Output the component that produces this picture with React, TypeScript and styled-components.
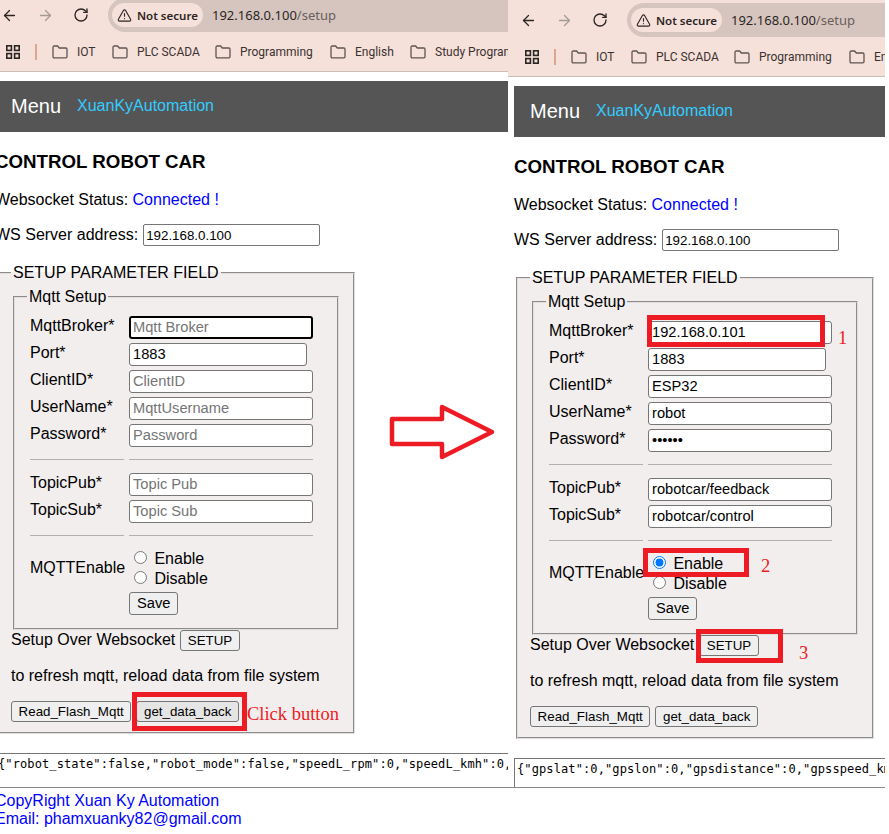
import styled, { createGlobalStyle } from "styled-components"
import { ArrowLeft, ArrowRight, RotateCw, TriangleAlert } from "lucide-react"

const BOOKMARKS = [
  { name: "IOT", width: 60 },
  { name: "PLC SCADA", width: 103 },
  { name: "Programming", width: 115 },
  { name: "English", width: 80 },
  { name: "Study Programming", width: 150 },
]

type Field = { label: string; placeholder: string; value?: string; type?: string; short?: boolean; focused?: boolean }

const emptyFields: Field[][] = [
  [
    { label: "MqttBroker*", placeholder: "Mqtt Broker", focused: true },
    { label: "Port*", placeholder: "Port", value: "1883", short: true },
    { label: "ClientID*", placeholder: "ClientID" },
    { label: "UserName*", placeholder: "MqttUsername" },
    { label: "Password*", placeholder: "Password" },
  ],
  [
    { label: "TopicPub*", placeholder: "Topic Pub" },
    { label: "TopicSub*", placeholder: "Topic Sub" },
  ],
]

const filledFields: Field[][] = [
  [
    { label: "MqttBroker*", placeholder: "Mqtt Broker", value: "192.168.0.101" },
    { label: "Port*", placeholder: "Port", value: "1883", short: true },
    { label: "ClientID*", placeholder: "ClientID", value: "ESP32" },
    { label: "UserName*", placeholder: "MqttUsername", value: "robot" },
    { label: "Password*", placeholder: "Password", value: "robot1", type: "password" },
  ],
  [
    { label: "TopicPub*", placeholder: "Topic Pub", value: "robotcar/feedback" },
    { label: "TopicSub*", placeholder: "Topic Sub", value: "robotcar/control" },
  ],
]

function FolderIcon() {
  return (
    <svg width="16" height="14" viewBox="0 0 16 14" fill="none" stroke="#5f5552" strokeWidth="1.3">
      <path d="M1 2.2c0-.7.5-1.2 1.2-1.2h3.4l1.7 2h6.5c.7 0 1.2.5 1.2 1.2v7.4c0 .7-.5 1.2-1.2 1.2H2.2c-.7 0-1.2-.5-1.2-1.2z" />
    </svg>
  )
}

function AppsIcon() {
  return (
    <svg width="14" height="14" viewBox="0 0 14 14" fill="none" stroke="#2b2523" strokeWidth="1.6">
      <rect x="0.8" y="0.8" width="4.6" height="4.6" />
      <rect x="8.6" y="0.8" width="4.6" height="4.6" />
      <rect x="0.8" y="8.6" width="4.6" height="4.6" />
      <rect x="8.6" y="8.6" width="4.6" height="4.6" />
    </svg>
  )
}

function BrowserBar() {
  return (
    <Chrome>
      <NavRow>
        <NavButton>
          <ArrowLeft size={17} color="#2b2523" strokeWidth={1.8} />
        </NavButton>
        <NavButton>
          <ArrowRight size={17} color="#a39a96" strokeWidth={1.8} />
        </NavButton>
        <NavButton>
          <RotateCw size={16} color="#2b2523" strokeWidth={2} />
        </NavButton>
        <UrlBar>
          <SecurityChip>
            <TriangleAlert size={15} color="#2b2523" strokeWidth={1.8} />
            Not secure
          </SecurityChip>
          <UrlText>
            192.168.0.100<UrlPath>/setup</UrlPath>
          </UrlText>
        </UrlBar>
      </NavRow>
      <BookmarkRow>
        <AppsIcon />
        <BookmarkDivider />
        {BOOKMARKS.map((bookmark) => (
          <Bookmark key={bookmark.name} $width={bookmark.width}>
            <FolderIcon />
            {bookmark.name}
          </Bookmark>
        ))}
      </BookmarkRow>
    </Chrome>
  )
}

function SetupPage({ fields, enabled, feedback, hoverGetData }: { fields: Field[][]; enabled: boolean; feedback: string; hoverGetData?: boolean }) {
  return (
    <Page>
      <TopBar>
        <MenuLabel>Menu</MenuLabel>
        <BrandLink>XuanKyAutomation</BrandLink>
      </TopBar>
      <Title>CONTROL ROBOT CAR</Title>
      <Paragraph>
        Websocket Status: <Connected>Connected !</Connected>
      </Paragraph>
      <ServerRow>
        WS Server address:
        <ServerInput readOnly value="192.168.0.100" />
      </ServerRow>
      <OuterFieldset>
        <legend>SETUP PARAMETER FIELD</legend>
        <InnerFieldset>
          <legend>Mqtt Setup</legend>
          <FormGrid>
            {fields.map((group, index) => (
              <FieldGroup key={index}>
                {group.map((field) => (
                  <FieldRow key={field.label}>
                    <FieldLabel>{field.label}</FieldLabel>
                    <TextInput readOnly type={field.type ?? "text"} placeholder={field.placeholder} value={field.value ?? ""} $short={field.short} $focused={field.focused} />
                  </FieldRow>
                ))}
                <RuleRow>
                  <Rule />
                  <Rule />
                </RuleRow>
              </FieldGroup>
            ))}
            <EnableRow>
              <FieldLabel>MQTTEnable</FieldLabel>
              <RadioStack>
                <label>
                  <Radio type="radio" name={`en-${feedback.length}`} readOnly checked={enabled} /> Enable
                </label>
                <label>
                  <Radio type="radio" name={`en-${feedback.length}`} readOnly checked={false} /> Disable
                </label>
              </RadioStack>
            </EnableRow>
            <SaveRow>
              <PageButton>Save</PageButton>
            </SaveRow>
          </FormGrid>
        </InnerFieldset>
        <SetupLine>
          Setup Over Websocket
          <PageButton $slim>SETUP</PageButton>
        </SetupLine>
        <RefreshNote>to refresh mqtt, reload data from file system</RefreshNote>
        <ActionRow>
          <PageButton $slim>Read_Flash_Mqtt</PageButton>
          <PageButton $slim $hover={hoverGetData}>
            get_data_back
          </PageButton>
        </ActionRow>
      </OuterFieldset>
      <Feedback readOnly wrap="off" value={feedback} />
    </Page>
  )
}

export default function App() {
  return (
    <Sheet>
      <GlobalStyle />
      <Shots>
        <Shot>
          <ShotInner $cropped>
            <BrowserBar />
            <SetupPage
              fields={emptyFields}
              enabled={false}
              hoverGetData
              feedback={'{"robot_state":false,"robot_mode":false,"speedL_rpm":0,"speedL_kmh":0,"speedR_rpm":0}'}
            />
          </ShotInner>
        </Shot>
        <Shot>
          <ShotInner>
            <BrowserBar />
            <SetupPage fields={filledFields} enabled feedback={'{"gpslat":0,"gpslon":0,"gpsdistance":0,"gpsspeed_kmh":0}'} />
          </ShotInner>
        </Shot>
      </Shots>
      <FooterRule />
      <Footer>
        <div>CopyRight Xuan Ky Automation</div>
        <div>Email: phamxuanky82@gmail.com</div>
      </Footer>

      <Highlight $x={132} $y={692} $w={115} $h={39} />
      <Note $x={247} $y={704}>Click button</Note>
      <Highlight $x={647} $y={315} $w={178} $h={32} />
      <Note $x={838} $y={328}>1</Note>
      <Highlight $x={643} $y={548} $w={106} $h={29} />
      <Note $x={761} $y={556}>2</Note>
      <Highlight $x={696} $y={629} $w={87} $h={34} />
      <Note $x={799} $y={643}>3</Note>
      <FlowArrow width="110" height="60" viewBox="0 0 110 60" fill="none" stroke="#ed1c24" strokeWidth="4.5" strokeLinejoin="round">
        <path d="M3 16h50V4l50 25-50 25V41H3z" />
      </FlowArrow>
    </Sheet>
  )
}

const GlobalStyle = createGlobalStyle`
  html, body {
    margin: 0;
    background: #fff;
  }
  body {
    font-family: "Liberation Sans", Arial, sans-serif;
    font-size: 16px;
    color: #000;
  }
`

const Sheet = styled.div`
  position: relative;
  width: 889px;
  height: 834px;
  overflow: hidden;
  background: #fff;
`

const Shots = styled.div`
  display: grid;
  grid-template-columns: 508px 377px;
  height: 787px;
  width: 885px;
`

const Shot = styled.div`
  overflow: hidden;
  min-width: 0;
`

const ShotInner = styled.div<{ $cropped?: boolean }>`
  margin: ${(p) => (p.$cropped ? "-5px 0 0 -11px" : "0")};
`

const Chrome = styled.div`
  height: 77px;
  box-sizing: border-box;
  background: #f6e0da;
  border-bottom: 1px solid #cdbdb8;
  font-family: "Noto Sans", "Open Sans", sans-serif;
  white-space: nowrap;
  overflow: hidden;
`

const NavRow = styled.div`
  display: flex;
  align-items: center;
  height: 37px;
  padding: 3px 0 0 2px;
  box-sizing: border-box;
`

const NavButton = styled.div`
  flex: none;
  width: 36px;
  display: flex;
  justify-content: center;
`

const UrlBar = styled.div`
  flex: 1;
  display: flex;
  align-items: center;
  height: 34px;
  margin-left: 9px;
  padding-left: 4px;
  background: #d6c5bf;
  border-radius: 17px 0 0 17px;
`

const SecurityChip = styled.div`
  display: flex;
  align-items: center;
  gap: 5px;
  height: 24px;
  width: 91px;
  box-sizing: border-box;
  padding-left: 5px;
  background: #f6e0da;
  border-radius: 12px;
  font-size: 11.5px;
  font-weight: 600;
  color: #2b2523;
`

const UrlText = styled.div`
  margin-left: 9px;
  font-size: 13px;
  color: #2b2523;
`

const UrlPath = styled.span`
  color: #6a5f5b;
`

const BookmarkRow = styled.div`
  display: flex;
  align-items: center;
  height: 39px;
  padding-left: 17px;
  font-family: Roboto, sans-serif;
  font-size: 12px;
  color: #3a3230;
  svg {
    flex: none;
  }
`

const BookmarkDivider = styled.div`
  flex: none;
  width: 1.5px;
  height: 16px;
  margin: 0 15.5px 0 15px;
  background: #dea595;
`

const Bookmark = styled.div<{ $width: number }>`
  flex: none;
  display: flex;
  align-items: center;
  gap: 9px;
  width: ${(p) => p.$width}px;
`

const Page = styled.div`
  margin-left: 6px;
  padding-top: 9px;
`

const TopBar = styled.div`
  display: flex;
  align-items: center;
  gap: 16px;
  height: 51px;
  padding-left: 16px;
  background: #555;
`

const MenuLabel = styled.span`
  color: #fff;
  font-size: 20px;
`

const BrandLink = styled.span`
  color: #33ccff;
  position: relative;
  bottom: 1px;
`

const Title = styled.h3`
  margin: 18.72px 0;
  font-size: 18.72px;
`

const Paragraph = styled.p`
  margin: 16px 0;
`

const Connected = styled.span`
  color: #00f;
`

const ServerRow = styled.div`
  display: flex;
  align-items: center;
  gap: 5px;
  height: 22px;
  margin: -1px 0 18px;
`

const ServerInput = styled.input`
  width: 177px;
  height: 22px;
  box-sizing: border-box;
  padding: 1px 2px;
  border: 1px solid #767676;
  border-radius: 2px;
  font-family: "Liberation Sans", Arial, sans-serif;
  font-size: 13.33px;
`

const OuterFieldset = styled.fieldset`
  width: 358px;
  box-sizing: border-box;
  margin: 0 2px;
  padding-bottom: 10px;
  border: 2px groove #e2dede;
  background: #f3eeee;
`

const InnerFieldset = styled.fieldset`
  margin: 0 2px;
  padding-bottom: 13px;
  border: 2px groove #e2dede;
`

const FormGrid = styled.div`
  display: flex;
  flex-direction: column;
  margin-top: 4px;
  padding-left: 3px;
`

const FieldGroup = styled.div`
  display: flex;
  flex-direction: column;
  gap: 4px;
`

const FieldRow = styled.div`
  display: flex;
  align-items: center;
  gap: 5px;
`

const FieldLabel = styled.span`
  flex: none;
  width: 94px;
  position: relative;
  bottom: 1px;
  white-space: nowrap;
`

const TextInput = styled.input<{ $short?: boolean; $focused?: boolean }>`
  width: ${(p) => (p.$short ? 178 : 184)}px;
  height: 23px;
  box-sizing: border-box;
  padding: 1px 3px;
  border: ${(p) => (p.$focused ? "2px solid #000" : "1px solid #767676")};
  padding-left: ${(p) => (p.$focused ? 2 : 3)}px;
  border-radius: 3px;
  background: #fff;
  font-family: "Liberation Sans", Arial, sans-serif;
  font-size: 14.67px;
  outline: none;
  &::placeholder {
    color: #757575;
  }
`

const RuleRow = styled.div`
  display: flex;
  gap: 5px;
  align-items: flex-start;
  height: 22px;
  padding-top: 8px;
  box-sizing: border-box;
`

const Rule = styled.div`
  border-top: 1px solid #b4aeae;
  &:first-child {
    width: 94px;
  }
  &:last-child {
    width: 184px;
  }
`

const EnableRow = styled.div`
  display: flex;
  align-items: center;
  gap: 5px;
  margin-top: -1px;
  ${FieldLabel} {
    bottom: 0;
  }
`

const RadioStack = styled.div`
  display: flex;
  flex-direction: column;
  label {
    display: block;
    height: 20px;
    line-height: 20px;
    white-space: nowrap;
  }
`

const Radio = styled.input`
  margin: 3px 3px 0 5px;
`

const SaveRow = styled.div`
  margin: 4px 0 0 99px;
`

const PageButton = styled.button<{ $slim?: boolean; $hover?: boolean }>`
  height: ${(p) => (p.$slim ? 21 : 23)}px;
  padding: 0 ${(p) => (p.$slim ? 6.6 : 7)}px;
  border: 1px solid #767676;
  border-radius: 3px;
  background: ${(p) => (p.$hover ? "#e5e5e5" : "#efefef")};
  color: #000;
  font-family: "Liberation Sans", Arial, sans-serif;
  font-size: ${(p) => (p.$slim ? 13.33 : 14.67)}px;
`

const SetupLine = styled.div`
  display: flex;
  align-items: center;
  gap: 5px;
`

const RefreshNote = styled.p`
  margin: 16px 0;
`

const ActionRow = styled.div`
  display: flex;
  gap: 5px;
`

const Feedback = styled.textarea`
  display: block;
  width: 1100px;
  height: 44px;
  box-sizing: border-box;
  margin-top: 19px;
  padding: 3px 2px;
  border: 1px solid #767676;
  border-radius: 0;
  font-family: "DejaVu Sans Mono", monospace;
  font-size: 12px;
  letter-spacing: 0.11px;
  overflow: hidden;
  resize: none;
`

const FooterRule = styled.div`
  width: 885px;
  border-top: 1px solid #888;
`

const Footer = styled.div`
  margin: 4px 0 0 -5px;
  color: #00f;
  line-height: 18px;
`

const Highlight = styled.div<{ $x: number; $y: number; $w: number; $h: number }>`
  position: absolute;
  left: ${(p) => p.$x}px;
  top: ${(p) => p.$y}px;
  width: ${(p) => p.$w}px;
  height: ${(p) => p.$h}px;
  box-sizing: border-box;
  border: 5px solid #ed1c24;
`

const Note = styled.div<{ $x: number; $y: number }>`
  position: absolute;
  left: ${(p) => p.$x}px;
  top: ${(p) => p.$y}px;
  color: #ed1c24;
  font-family: "Liberation Serif", "Times New Roman", serif;
  font-size: 18.5px;
  white-space: nowrap;
`

const FlowArrow = styled.svg`
  position: absolute;
  left: 389px;
  top: 403px;
`
